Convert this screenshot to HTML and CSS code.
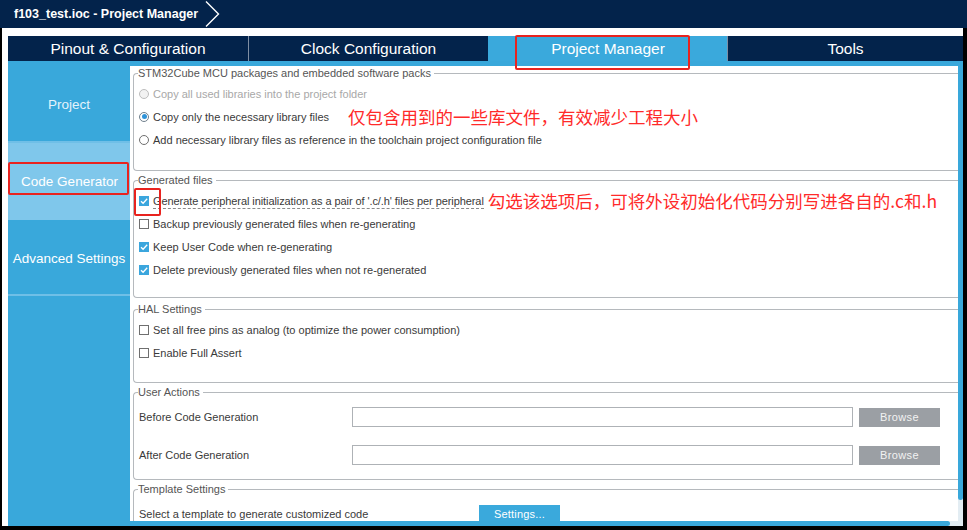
FILE: index.html
```html
<!DOCTYPE html>
<html lang="en">
<head>
<meta charset="utf-8">
<title>f103_test.ioc - Project Manager</title>
<link rel="stylesheet" href="styles.css">
</head>
<body>
<div class="app">
  <header class="titlebar">
    <span class="title">f103_test.ioc - Project Manager</span>
    <svg class="crumb" width="16" height="28" viewBox="0 0 16 28"><path d="M1 1.5 L13.5 14 L1 26.5" fill="none" stroke="#ffffff" stroke-width="1.4"/></svg>
  </header>
  <div class="frame">
    <nav class="tabs">
      <div class="tab t1">Pinout &amp; Configuration</div>
      <div class="tab t2">Clock Configuration</div>
      <div class="tab t3 active">Project Manager</div>
      <div class="tab t4">Tools</div>
    </nav>
    <div class="main">
      <aside class="sidebar">
        <div class="side-item project">Project</div>
        <div class="side-item selected"><span class="side-box">Code Generator</span></div>
        <div class="side-item advanced">Advanced Settings</div>
      </aside>
      <div class="center">
        <div class="center-row">
          <section class="content">
            <div class="group g1">
              <div class="gtitle">STM32Cube MCU packages and embedded software packs</div>
              <div class="rows">
                <div class="opt disabled"><span class="radio off dis"></span><span>Copy all used libraries into the project folder</span></div>
                <div class="opt"><span class="radio on"></span><span>Copy only the necessary library files</span><span class="note note1">仅包含用到的一些库文件，有效减少工程大小</span></div>
                <div class="opt"><span class="radio off"></span><span>Add necessary library files as reference in the toolchain project configuration file</span></div>
              </div>
            </div>
            <div class="group g2">
              <div class="gtitle">Generated files</div>
              <div class="rows">
                <div class="opt"><span class="mark"><svg class="cb" width="10" height="10" viewBox="0 0 10 10"><rect width="10" height="10" fill="#3ba6dd"/><path d="M2 5.2 L4.1 7.3 L8.2 2.8" fill="none" stroke="#fff" stroke-width="1.3"/></svg></span><span class="focus">Generate peripheral initialization as a pair of '.c/.h' files per peripheral</span><span class="note note2">勾选该选项后，可将外设初始化代码分别写进各自的.c和.h</span></div>
                <div class="opt"><svg class="cb" width="10" height="10" viewBox="0 0 10 10"><rect x="0.5" y="0.5" width="9" height="9" fill="#fff" stroke="#6f6f6f"/></svg><span>Backup previously generated files when re-generating</span></div>
                <div class="opt"><svg class="cb" width="10" height="10" viewBox="0 0 10 10"><rect width="10" height="10" fill="#3ba6dd"/><path d="M2 5.2 L4.1 7.3 L8.2 2.8" fill="none" stroke="#fff" stroke-width="1.3"/></svg><span>Keep User Code when re-generating</span></div>
                <div class="opt"><svg class="cb" width="10" height="10" viewBox="0 0 10 10"><rect width="10" height="10" fill="#3ba6dd"/><path d="M2 5.2 L4.1 7.3 L8.2 2.8" fill="none" stroke="#fff" stroke-width="1.3"/></svg><span>Delete previously generated files when not re-generated</span></div>
              </div>
            </div>
            <div class="group g3">
              <div class="gtitle">HAL Settings</div>
              <div class="rows">
                <div class="opt"><svg class="cb" width="10" height="10" viewBox="0 0 10 10"><rect x="0.5" y="0.5" width="9" height="9" fill="#fff" stroke="#6f6f6f"/></svg><span>Set all free pins as analog (to optimize the power consumption)</span></div>
                <div class="opt"><svg class="cb" width="10" height="10" viewBox="0 0 10 10"><rect x="0.5" y="0.5" width="9" height="9" fill="#fff" stroke="#6f6f6f"/></svg><span>Enable Full Assert</span></div>
              </div>
            </div>
            <div class="group g4">
              <div class="gtitle">User Actions</div>
              <div class="rows">
                <div class="action"><span class="alabel">Before Code Generation</span><span class="field"></span><span class="browse">Browse</span></div>
                <div class="action"><span class="alabel">After Code Generation</span><span class="field"></span><span class="browse">Browse</span></div>
              </div>
            </div>
            <div class="group g5">
              <div class="gtitle">Template Settings</div>
              <div class="rows">
                <div class="action tpl"><span class="tlabel">Select a template to generate customized code</span><span class="settings">Settings...</span></div>
              </div>
            </div>
          </section>
          <div class="vscroll"><div class="vthumb"></div></div>
        </div>
        <div class="hscroll"><div class="hthumb"></div></div>
      </div>
    </div>
  </div>
</div>
</body>
</html>
```
FILE: styles.css
```css
* { box-sizing: border-box; }
html, body { margin: 0; padding: 0; }
body {
  background: #000;
  width: 967px;
  height: 530px;
  overflow: hidden;
  font-family: "Liberation Sans", Arial, sans-serif;
}
.app { width: 967px; height: 530px; display: flex; flex-direction: column; }

.titlebar {
  height: 28px;
  background: #03234b;
  display: flex;
  align-items: center;
  padding-left: 14px;
  flex: none;
}
.title { color: #fff; font-weight: bold; font-size: 12.5px; }
.crumb { margin-left: 7px; display: block; }

.frame {
  margin: 0 4px 0 2px;
  width: 961px;
  height: 498px;
  background: #fff;
  padding: 8px 0 0 6px;
  display: flex;
  flex-direction: column;
}
.tabs { display: flex; height: 25px; flex: none; position: relative; }
.tab {
  background: #03234b;
  color: #fff;
  font-size: 15.5px;
  display: flex;
  align-items: center;
  justify-content: center;
  border-left: 1px solid #7f8ea3;
  padding-top: 1px;
  flex: none;
}
.t1 { width: 240px; border-left: 0; }
.t2 { width: 240px; }
.t3 { width: 239px; }
.t4 { flex: 1; }
.tab.active { background: #3aa9dc; border-left: 1px solid #3aa9dc; position: relative; }
.tab.active::after {
  content: "";
  position: absolute;
  left: 26px;
  top: -1px;
  width: 171px;
  height: 31px;
  border: 2px solid #e8231f;
  border-radius: 2px;
}

.main {
  flex: 1;
  display: flex;
  background: #39a8db;
  padding-top: 5px;
}
.sidebar { width: 122px; flex: none; display: flex; flex-direction: column; }
.side-item {
  color: #fff;
  font-size: 13.5px;
  display: flex;
  align-items: center;
  justify-content: center;
}
.project { height: 77px; padding-top: 2px; border-bottom: 2px solid #6fbfe7; color: #e4f3fb; }
.selected { height: 77px; background: #7fc7eb; align-items: flex-start; justify-content: flex-start; }
.side-box {
  display: block;
  margin-top: 19px;
  width: 121px;
  height: 33px;
  border: 2px solid #e8231f;
  border-radius: 2px;
  text-align: center;
  padding: 6px 0 0 2px;
  line-height: 23px;
}
.advanced { height: 76px; border-bottom: 2px solid #6fbfe7; padding-top: 2px; }

.center { width: 833px; flex: none; display: flex; flex-direction: column; }
.center-row { flex: 1; display: flex; }
.content {
  width: 828px;
  flex: none;
  height: 455px;
  background: #fff;
  overflow: hidden;
  font-size: 11px;
  color: #3a3a3a;
}
.vscroll { width: 5px; flex: none; background: #e3edf3; }
.vthumb { height: 434px; background: #39a8db; border-radius: 0 0 3px 3px; }
.hscroll { height: 5px; background: #e3edf3; display: flex; }
.hthumb { width: 820px; background: #39a8db; border-radius: 0 3px 3px 0; }

.group {
  width: 900px;
  margin-left: 3px;
  border: 1px solid #b5b9bd;
  border-right: 0;
  border-radius: 4px 0 0 4px;
}
.gtitle {
  width: max-content;
  margin: -7px 0 0 4px;
  padding: 0 3px 0 0;
  background: #fff;
  line-height: 13px;
  color: #555;
}
.g1 { margin-top: 7px; padding-bottom: 19px; }
.g1 .rows { margin-top: 2px; }
.g2 { margin-top: 9px; padding-bottom: 16px; }
.g2 .rows { margin-top: 2px; }
.g3 { margin-top: 11px; padding-bottom: 18px; }
.g3 .rows { margin-top: 2px; }
.g4 { margin-top: 9px; padding-bottom: 5px; }
.g4 .rows { margin-top: -1px; }
.g5 { margin-top: 9px; padding-bottom: 10px; }
.g5 .rows { margin-top: 6px; }

.opt {
  height: 23px;
  display: flex;
  align-items: center;
  padding-left: 5px;
  white-space: nowrap;
}
.opt > .cb, .opt > .radio, .opt > .mark { margin-right: 4px; flex: none; }
.cb { display: block; }
.disabled { color: #a8a8a8; }
.radio {
  width: 10px;
  height: 10px;
  border-radius: 50%;
  border: 1px solid #6f6f6f;
  background: #fff;
  display: inline-flex;
  align-items: center;
  justify-content: center;
}
.radio.dis { border-color: #bdbdbd; background: #f2f2f2; }
.radio.on { border-color: #6f7f8c; }
.radio.on::after {
  content: "";
  width: 5px;
  height: 5px;
  border-radius: 50%;
  background: #2f93d8;
}
.mark { position: relative; display: block; width: 10px; height: 10px; }
.mark::after {
  content: "";
  position: absolute;
  left: -5px;
  top: -8px;
  width: 23px;
  height: 24px;
  border: 2px solid #e8231f;
  border-radius: 2px;
}
.focus {
  border-bottom: 1px dashed #8a8a8a;
  line-height: 13px;
  margin-top: 2px;
  letter-spacing: -0.08px;
}
.note {
  font-family: "Noto Sans CJK SC", "Liberation Sans", sans-serif;
  font-size: 17.5px;
  color: #ff2a2a;
  line-height: 23px;
}
.note1 { margin-left: 19px; }
.note2 { margin-left: 4px; }

.action { height: 38px; display: flex; align-items: center; padding-left: 5px; }
.alabel { width: 213px; }
.field { width: 501px; height: 20px; border: 1px solid #aeb2b6; background: #fff; }
.browse {
  margin-left: 6px;
  width: 81px;
  height: 19px;
  background: #9b9fa4;
  color: #f2f2f2;
  letter-spacing: 0.4px;
  display: flex;
  align-items: center;
  justify-content: center;
}
.tpl { height: 23px; }
.tlabel { width: 340px; }
.settings {
  width: 81px;
  height: 18px;
  background: #3aa9dc;
  color: #fff;
  display: flex;
  align-items: center;
  justify-content: center;
  letter-spacing: 0.2px;
}
```
